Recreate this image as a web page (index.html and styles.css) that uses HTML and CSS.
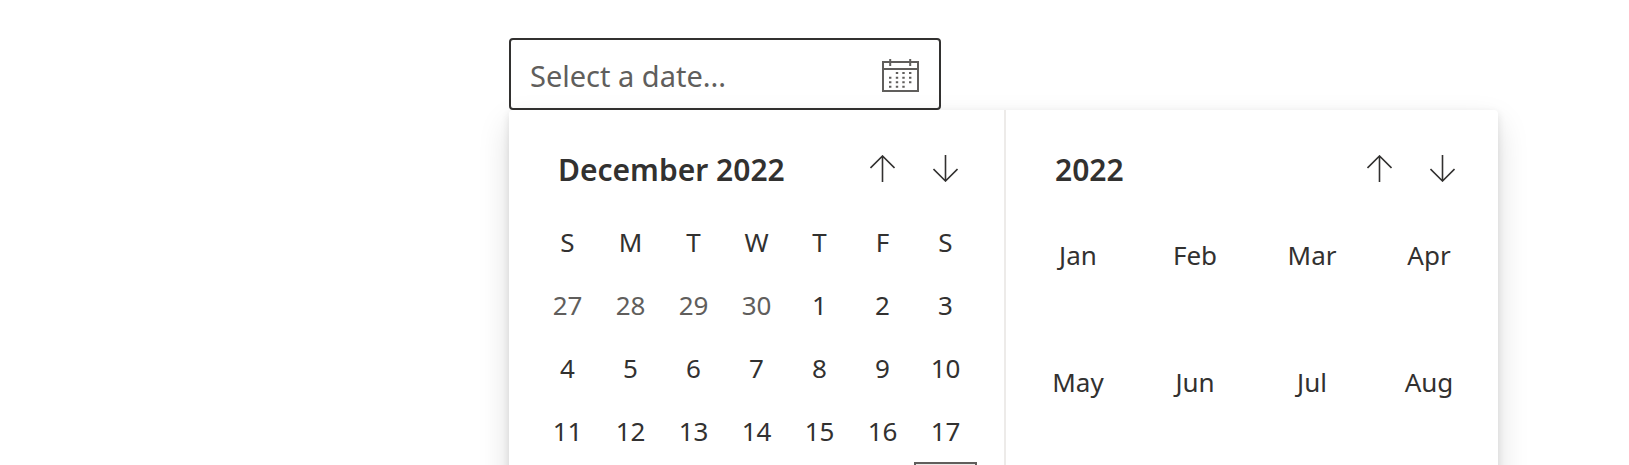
FILE: index.html
```html
<!DOCTYPE html>
<html lang="en">
  <head>
    <meta charset="utf-8" />
    <title>Date picker</title>
    <link rel="stylesheet" href="styles.css">
  </head>
  <body>
    <div class="datepicker">
      <div class="field">
        <input type="text" class="field-input" placeholder="Select a date..." aria-label="Select a date" />
        <button type="button" class="field-icon" aria-label="Open calendar">
          <svg width="37" height="34" viewBox="0 0 37 34">
            <path class="frame" d="M1 3h35v29H1zM1 10h35M8.2 0v7M28.2 0v7" />
            <path class="dots" d="M13.8 14h2.4M20.3 14h2.4M27 14h2.4M7 18.8h2.4M13.8 18.8h2.4M20.3 18.8h2.4M27 18.8h2.4M7 23.2h2.4M13.8 23.2h2.4M20.3 23.2h2.4M27 23.2h2.4M7 27.8h2.4M13.8 27.8h2.4M20.3 27.8h2.4" />
          </svg>
        </button>
      </div>

      <div class="callout">
        <div class="panel day-panel">
          <div class="header">
            <button type="button" class="title">December 2022</button>
            <button type="button" class="nav" aria-label="Previous month">
              <svg width="25" height="27" viewBox="0 0 25 27"><path d="M12.5 27V1M0.5 13L12.5 1l12 12" /></svg>
            </button>
            <button type="button" class="nav" aria-label="Next month">
              <svg width="25" height="27" viewBox="0 0 25 27"><path d="M12.5 0v26M0.5 14l12 12 12-12" /></svg>
            </button>
          </div>
          <table class="days">
            <thead>
              <tr><th>S</th><th>M</th><th>T</th><th>W</th><th>T</th><th>F</th><th>S</th></tr>
            </thead>
            <tbody>
              <tr>
                <td><button type="button" class="day outside">27</button></td>
                <td><button type="button" class="day outside">28</button></td>
                <td><button type="button" class="day outside">29</button></td>
                <td><button type="button" class="day outside">30</button></td>
                <td><button type="button" class="day">1</button></td>
                <td><button type="button" class="day">2</button></td>
                <td><button type="button" class="day">3</button></td>
              </tr>
              <tr>
                <td><button type="button" class="day">4</button></td>
                <td><button type="button" class="day">5</button></td>
                <td><button type="button" class="day">6</button></td>
                <td><button type="button" class="day">7</button></td>
                <td><button type="button" class="day">8</button></td>
                <td><button type="button" class="day">9</button></td>
                <td><button type="button" class="day">10</button></td>
              </tr>
              <tr>
                <td><button type="button" class="day">11</button></td>
                <td><button type="button" class="day">12</button></td>
                <td><button type="button" class="day">13</button></td>
                <td><button type="button" class="day">14</button></td>
                <td><button type="button" class="day">15</button></td>
                <td><button type="button" class="day">16</button></td>
                <td><button type="button" class="day">17</button></td>
              </tr>
              <tr>
                <td colspan="6"></td>
                <td><button type="button" class="day selected" aria-label="24"></button></td>
              </tr>
            </tbody>
          </table>
        </div>

        <div class="panel month-panel">
          <div class="header">
            <button type="button" class="title">2022</button>
            <button type="button" class="nav" aria-label="Previous year">
              <svg width="25" height="27" viewBox="0 0 25 27"><path d="M12.5 27V1M0.5 13L12.5 1l12 12" /></svg>
            </button>
            <button type="button" class="nav" aria-label="Next year">
              <svg width="25" height="27" viewBox="0 0 25 27"><path d="M12.5 0v26M0.5 14l12 12 12-12" /></svg>
            </button>
          </div>
          <div class="months">
            <button type="button" class="month">Jan</button>
            <button type="button" class="month">Feb</button>
            <button type="button" class="month">Mar</button>
            <button type="button" class="month">Apr</button>
            <button type="button" class="month">May</button>
            <button type="button" class="month">Jun</button>
            <button type="button" class="month">Jul</button>
            <button type="button" class="month">Aug</button>
          </div>
        </div>
      </div>
    </div>
  </body>
</html>
```

FILE: styles.css
```css
* {
  box-sizing: border-box;
}

body {
  margin: 0;
  padding: 38px 0 0 509px;
  min-height: 100vh;
  overflow: hidden;
  background-color: #fff;
  color: #323130;
  font-family: "Segoe UI", "Noto Sans", sans-serif;
  font-size: 26px;
}

button,
input {
  font: inherit;
  color: inherit;
  background: none;
  border: none;
  padding: 0;
}

button {
  cursor: pointer;
}

.datepicker {
  position: relative;
  max-width: 432px;
}

.field {
  display: flex;
  align-items: center;
  height: 72px;
  padding: 3px 20px 0 19px;
  border: 2px solid #323130;
  border-radius: 4px;
}

.field-input {
  flex: 1;
  min-width: 0;
  font-size: 29px;
  outline: none;
}

.field-input::placeholder {
  color: #605e5c;
  opacity: 1;
}

.field-icon,
.nav {
  display: flex;
  align-items: center;
  justify-content: center;
}

.field-icon svg {
  fill: none;
  stroke: #605e5c;
  stroke-width: 2;
}

/* opens over whatever is below the field */
.callout {
  position: absolute;
  top: 100%;
  left: 0;
  display: flex;
  width: max-content;
  background-color: #fff;
  border-radius: 4px;
  box-shadow: 0 14px 32px rgba(0, 0, 0, 0.132), 0 3px 8px rgba(0, 0, 0, 0.108);
}

.panel {
  padding: 27px;
}

.month-panel {
  padding-right: 24px;
  border-left: 2px solid #edebe9;
}

.header {
  display: flex;
  height: 63px;
  margin-bottom: 10px;
}

.title {
  flex: 1;
  padding: 2px 0 0 22px;
  text-align: left;
  font-size: 30px;
  font-weight: 600;
  white-space: nowrap;
}

.nav {
  width: 63px;
}

.nav svg {
  fill: none;
  stroke: #323130;
  stroke-width: 1.6;
}

.days {
  width: 441px;
  table-layout: fixed;
  border-collapse: collapse;
  text-align: center;
}

.days th,
.days td {
  height: 63px;
  padding: 0;
  font-weight: 400;
}

.day {
  display: block;
  width: 100%;
  height: 63px;
}

.outside {
  color: #605e5c;
}

.selected {
  background-color: #edebe9;
  border: 2px solid #605e5c;
}

.months {
  display: grid;
  grid-template-columns: repeat(4, 90px);
  gap: 37px 27px;
}

.month {
  height: 90px;
}
```
